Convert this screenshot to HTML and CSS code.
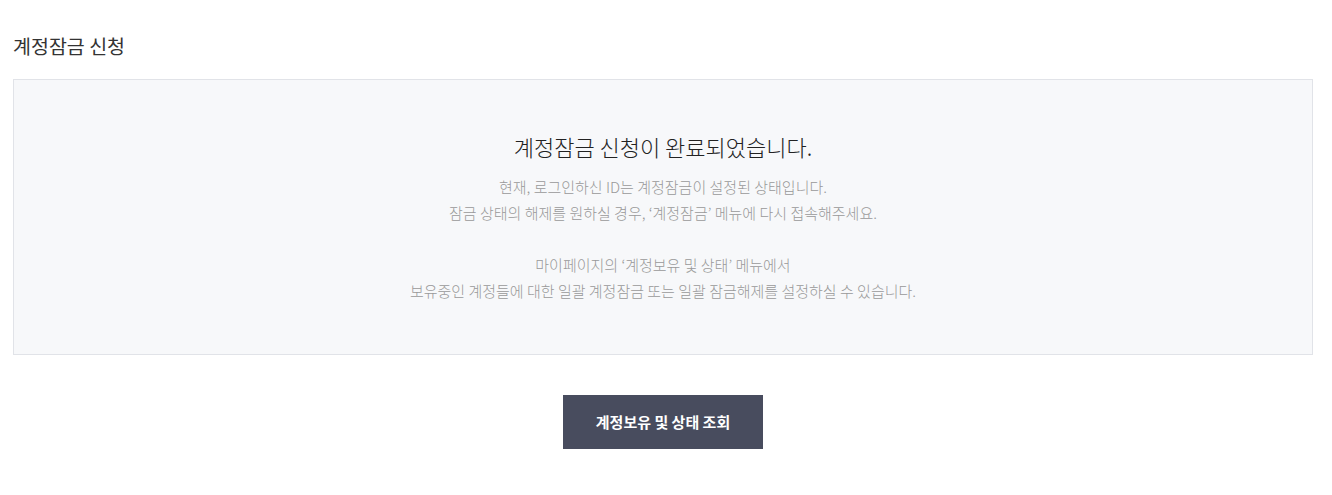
FILE: index.html
```html
<!DOCTYPE html>
<html>
<head>
	<meta name="viewport" content="width=device-width, initial-scale=1.0">
	<link rel="stylesheet" href="styles.css">
	<title>계정잠금 신청</title>
</head>
<body>
	<div class="content">
		<h2 class="page-title">계정잠금 신청</h2>
		<div class="result-box">
			<h3 class="result-title">계정잠금 신청이 완료되었습니다.</h3>
			<p class="result-desc">현재, 로그인하신 ID는 계정잠금이 설정된 상태입니다.<br>잠금 상태의 해제를 원하실 경우, ‘계정잠금’ 메뉴에 다시 접속해주세요.</p>
			<p class="result-desc">마이페이지의 ‘계정보유 및 상태’ 메뉴에서<br>보유중인 계정들에 대한 일괄 계정잠금 또는 일괄 잠금해제를 설정하실 수 있습니다.</p>
		</div>
		<div class="btn-area">
			<a href="#" class="btn-dark">계정보유 및 상태 조회</a>
		</div>
	</div>
</body>
</html>
```

FILE: styles.css
```css
body {
	margin: 0;
	font-family: "Noto Sans CJK KR", "Noto Sans", sans-serif;
	color: #333;
	background: #fff;
}

.content {
	padding: 33px 19px 0 13px;
}

.page-title {
	margin: 0 0 20px;
	font-size: 19.5px;
	font-weight: 400;
	line-height: 26px;
	color: #333;
}

.result-box {
	height: 274px;
	border: 1px solid #e1e3e8;
	background-color: #f7f8fa;
	text-align: center;
}

.result-title {
	margin: 50px 0 12px;
	font-size: 22px;
	font-weight: 300;
	line-height: 32px;
	color: #222;
}

.result-desc {
	margin: 0 0 26px;
	font-size: 15px;
	font-weight: 300;
	line-height: 26px;
	color: #999;
}

.btn-area {
	padding-top: 40px;
	text-align: center;
}

.btn-dark {
	display: inline-block;
	width: 200px;
	height: 54px;
	line-height: 54px;
	background-color: #484c5e;
	color: #fff;
	font-size: 15px;
	font-weight: 700;
	text-decoration: none;
}
```
